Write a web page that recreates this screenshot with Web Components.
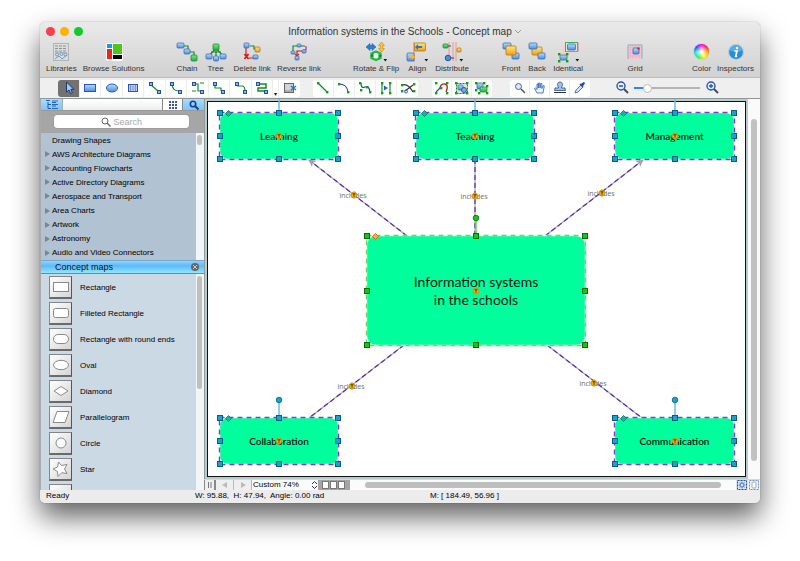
<!DOCTYPE html>
<html lang="en">
<head>
<meta charset="utf-8">
<title>Information systems in the Schools - Concept map</title>
<style>
html,body{margin:0;height:100%;background:#fff}
body{box-sizing:border-box;padding:22px 40px 58px;display:flex;font-family:"Liberation Sans",Arial,sans-serif;font-size:8px;color:#111;overflow:hidden}
</style>
</head>
<body>
<app-window>
  <title-bar slot="title">Information systems in the Schools - Concept map</title-bar>
  <main-toolbar slot="toolbar"></main-toolbar>
  <tool-strip slot="strip"></tool-strip>
  <library-panel slot="side"></library-panel>
  <canvas-view slot="canvas">
    <map-link x1="199" y1="134" x2="101" y2="58" bx="146" by="93" arrow>includes</map-link>
    <map-link x1="267" y1="134" x2="267" y2="58" bx="267" by="94">includes</map-link>
    <map-link x1="337" y1="134" x2="435" y2="58" bx="394" by="91" arrow>includes</map-link>
    <map-link x1="196" y1="243" x2="101" y2="316" bx="144" by="284">includes</map-link>
    <map-link x1="339" y1="243" x2="434" y2="316" bx="386" by="281">includes</map-link>
    <map-node x="12" y="11" w="118" h="46" stem="24">Learning</map-node>
    <map-node x="208" y="11" w="118" h="46" stem="24">Teaching</map-node>
    <map-node x="407" y="11" w="119" h="46" stem="24">Management</map-node>
    <map-node x="12" y="316" w="118" h="46" stem="18">Collaboration</map-node>
    <map-node x="407" y="316" w="119" h="46" stem="18">Communication</map-node>
    <map-node x="159" y="134" w="218" h="109" stem="18" primary>Information systems<br>in the schools</map-node>
  </canvas-view>
  <status-bar slot="status"></status-bar>
</app-window>
<script>
const sq=(x,y,s=4)=>`<rect x="${x+.5}" y="${y+.5}" width="${s}" height="${s}" fill="#8ab6ee" stroke="#2450a0"/>`;
const dot=(x,y)=>`<rect x="${x}" y="${y}" width="2.4" height="2.4" fill="#12a012"/>`;
const box=(x,y,w,h,c='b')=>{const p={b:['url(#gb)','#3d6cae'],g:['url(#gg)','#1f8a35'],o:['url(#go)','#b07a10']}[c];return `<rect x="${x}" y="${y}" width="${w}" height="${h}" rx="1" fill="${p[0]}" stroke="${p[1]}" stroke-width=".8"/>`};
const line=(d,c='#168a2a',w=1.2)=>`<path d="${d}" fill="none" stroke="${c}" stroke-width="${w}"/>`;
const drop='<path d="M17.500 17h3.600l-1.800 2.400z" fill="#111"/>';
const defs='<defs><linearGradient id="gb" x2="0" y2="1"><stop stop-color="#b9dcff"/><stop offset="1" stop-color="#4b8ee0"/></linearGradient><linearGradient id="gg" x2="0" y2="1"><stop stop-color="#7dea7d"/><stop offset="1" stop-color="#1fae4a"/></linearGradient><linearGradient id="go" x2="0" y2="1"><stop stop-color="#ffe680"/><stop offset="1" stop-color="#f0a010"/></linearGradient></defs>';
const lens=s=>`<circle cx="7" cy="6" r="4" fill="#e4effc" stroke="#2c55a8" stroke-width="1.400"/><path d="M10 9l4 4" stroke="#4a4a55" stroke-width="2"/>${s}`;
const ICONS={
 libraries:[20,'<rect x="2.500" y="1.500" width="15" height="17" fill="#d9dde0" stroke="#b4b4b4"/><path d="M4 4h12M4 6.500h12M4 9h12" stroke="#8d9499" stroke-dasharray="3 1"/><g fill="none" stroke="#6d9ac4"><circle cx="6" cy="12.500" r="1.500"/><circle cx="10.500" cy="12" r="1.500"/><circle cx="14.500" cy="12.500" r="1.500"/><path d="M4 17l4-3 3 3 5-4"/></g><path d="M4 10.800h12" stroke="#aaa"/>'],
 browse:[20,'<rect x="2" y="1" width="17" height="18" rx="2" fill="#fff"/><path fill="#1698ea" d="M3 2h5v4H3z"/><path fill="#4cc71c" d="M9 2h9v10H9z"/><path fill="#ef2418" d="M3 7h5v10H3z"/><path fill="#000" d="M9 13h9v4H9z"/>'],
 chain:[20,line('M6 4h5v5M13 10h4v4')+box(0,1,7,5)+box(7,7,6,5)+box(14,13,6,6,'g')],
 tree:[20,line('M10 6L3 14M10 6v9M10 6l7 8M5 10h10')+box(7,2,6,6,'g')+box(0,12,6,5)+box(7.500,14,5,5)+box(14,12,6,5)],
 del:[20,line('M8 4h4v3h2')+line('M4 6v8M7 16h6','#d42020')+box(2,1,5,5)+box(13,5,5,5,'o')+box(11,13,5,4)+line('M2.500 12l4 5M6.500 12l-4 5','#e01515',1.800)],
 rev:[20,line('M4 10V4h4M11 4h5')+line('M17 4v4h-3','#c21bb0')+line('M8 14V9h6','#b52020')+box(8,2,4,3)+box(2,9,4,3)+box(13,8,4,3)+box(6,14,4,4)+line('M6 12l2 2 2-2','#d22')],
 rotate:[20,'<path d="M0 5l4-3.500v2h2v-2l4 3.500-4 3.500v-2H4v2z" fill="#2782d6" stroke="#165299" stroke-width=".5"/><path d="M15.500 0l3 3.500h-1.700v3h1.700l-3 3.500-3-3.500h1.700v-3h-1.700z" fill="#ffc42b" stroke="#a87510" stroke-width=".5"/><path d="M10 9.500l4.500 2v4.500l-4.500 2-4.500-2v-4.500z" fill="#e4f3e4" stroke="#29b548" stroke-width="2.400"/><path d="M4 14l3.500-3v4.500zM16 13.500l-3.500 3v-4.500z" fill="#188a35"/>'+drop],
 align:[20,line('M7 0v20','#ee8080')+box(7.500,1,11,8,'o')+'<path d="M8 5l3-3v2h4v2h-4v2z" fill="#2677d0"/>'+box(0,11,7,8)+'<path d="M8 15l-3-3v2H2v2h3v2z" fill="#ffb81c"/>'+drop],
 dist:[20,line('M7 0v19M11 0v19M14 0v19','#f08a8a',.9)+line('M4 4h5M9 16h3','#444')+box(1,2,5,4,'g')+box(15,6,4,4,'o')+'<circle cx="6" cy="16" r="2.800" fill="#4b8ee0" stroke="#24569c"/>'+drop],
 front:[20,box(2,1,8,6)+box(11,11,7,6)+box(5,4,10,9,'o')],
 back:[20,box(5,5,10,8,'o')+box(2,1,8,6)+box(11,11,7,6)],
 same:[20,'<path d="M7 1h12L8 18H0z" fill="#f5d0b5" opacity=".7"/><rect x="7.500" y=".5" width="12" height="9" fill="#dfe6ea" stroke="#3fae55"/><path d="M8 9.500h12v-9" fill="none" stroke="#e07a6a"/>'+box(9.500,2,8,6)+box(2,13,7,5)+dot(0,11)+dot(8,11)+dot(0,18)+dot(8,18)+drop],
 grid:[20,'<rect x="3" y="3" width="14" height="14" fill="#f3cad2"/><path d="M3 5.500h14M3 8h14M3 11h14M3 14h14M5.500 3v14M8 3v14M11 3v14M14 3v14" stroke="#e9a9b8" stroke-width=".6"/><path d="M3 17V3h14v14" fill="none" stroke="#8fa8d0"/>'+box(8,6,6,6)+'<circle cx="13.500" cy="6.500" r="1.200" fill="#d22"/>'],
 info:[20,'<circle cx="10" cy="10" r="7.500" fill="#2490d8" stroke="#c4ccd4" stroke-width="1.200"/><path d="M3.500 8a6.800 6.800 0 0113 0q-6 4-13 0" fill="#7cc2f0" opacity=".6"/><path d="M8.500 9h2.500l-1.300 5.500h1.500" fill="none" stroke="#fff" stroke-width="1.700"/><circle cx="11" cy="6" r="1.200" fill="#fff"/>'],
 arrow:[14,'<path d="M4.500 1v10l2.500-2 1.600 3.500 1.700-.8L8.800 8.300h3z" fill="#9ec7ff" stroke="#112d66" stroke-width=".9"/>'],
 rect:[14,'<rect x="1.500" y="3.500" width="11" height="7" fill="url(#gb)" stroke="#2b57ad"/>'],
 oval:[14,'<ellipse cx="7" cy="7" rx="5.500" ry="4" fill="url(#gb)" stroke="#2b57ad"/>'],
 text:[14,'<rect x="2.500" y="3.500" width="9" height="7" fill="#b7ccf5" stroke="#2b57ad"/><path d="M4.500 4v6M9.500 4v6" stroke="#6f94d8"/><path d="M6 5.500h2M6 7h2M6 8.500h2" stroke="#c58" stroke-width=".6"/>'],
 l1:[14,line('M3 4l7 6')+sq(1,1,3)+sq(9,9,3)], l2:[14,line('M3 4q1 6 7 6')+sq(1,1,3)+sq(9,9,3)],
 l3:[14,line('M3 3h4v7h3')+line('M1 10h4M9 2h4','#168a2a',1)+sq(1,1,3)+sq(9,9,3)], l4:[14,line('M3 4v3h6v3')+sq(1,1,3)+sq(9,9,3)],
 l5:[14,line('M3 5h5q3 0 3 5')+sq(1,1,3)+sq(9,9,3)], l6:[14,line('M4 3h7v4H3v3h7','#168a2a',1.500)+sq(1,1,3)+sq(9,9,3)],
 dlg:[14,'<rect x="1.500" y="2.500" width="9" height="9" fill="#cfd3d8" stroke="#666"/><path d="M2 10h8" stroke="#888"/><path d="M8 5l5 4M8 9l5-4" stroke="#1878c8" stroke-width="1.400"/>'],
 c1:[14,line('M2 2l9 9','#118a28')+dot(1,1)+dot(10,10)], c2:[14,line('M2 3q8 0 9 8','#2a50b8')+dot(1,2)+dot(10,10)],
 c3:[14,line('M3 2q0 6 4 4t5 5','#2a50b8')+dot(1,1)+dot(2,8)+dot(8,5)+dot(11,10)],
 c4:[14,line('M3 2v10M11 2v10','#168a2a')+'<path d="M5 4.500v5L9 7z" fill="#2a60c8"/>'+dot(2,1)+dot(2,11)+dot(10,1)+dot(10,11)],
 c5:[14,line('M1 4q6-2 11 7M12 4L4 10','#333')+dot(0,3)+dot(12,2)+dot(0,9)+dot(12,9)+'<circle cx="5" cy="10.500" r="1.500" fill="none" stroke="#2a60c8"/>'],
 d1:[14,line('M5 7q1-5 5-4t1 8','#c42020',1.400)+line('M1 11l5-5','#2a50b8')+dot(0,1)+dot(11,1)+dot(0,11)+dot(11,11)+dot(5,6)],
 d2:[14,'<rect x="1.500" y="2.500" width="11" height="10" fill="#d5e7d5" stroke="#168a2a" stroke-dasharray="2 1"/>'+box(3,4,5,5)+'<circle cx="9" cy="9" r="2.500" fill="#79aced" stroke="#2b57ad"/>'+dot(0,1)+dot(11,1)+dot(0,11)+dot(11,11)],
 d3:[14,box(2,2,6,6)+box(5,6,7,5,'g')+dot(0,1)+dot(8,1)+dot(0,8)+dot(3,11)+dot(11,11)+dot(11,4)],
 lens:[14,'<circle cx="5.500" cy="5.500" r="3" fill="#dce9fa" stroke="#3f66ae"/><path d="M8 8l4 4" stroke="#555" stroke-width="1.500"/>'],
 hand:[14,'<path d="M4 12L1.500 7.500l1-.7L4 8.500V3h1.200v4l.4-5h1.200l.2 5 .8-4.500h1.100L8.800 7.500l1.500-3 1 .4L10 12z" fill="#eaf2ff" stroke="#2b5bb5" stroke-width=".8"/>'],
 stamp:[14,'<path d="M7 1a2.500 2.500 0 012 4l-.5 2H12l.5 2.500h-11L2 7h3.500L5 5a2.500 2.500 0 012-4z" fill="#9ec2ee" stroke="#2b4f8f" stroke-width=".8"/><path d="M1 11.500h12" stroke="#333"/>'],
 pen:[14,'<path d="M2 12l1-3 5-5 2 2-5 5z" fill="#cfe2fb" stroke="#2b5bb5" stroke-width=".8"/><path d="M8 3l1-1 2-1 1 1-1 2-1 1 .5 1-1 .5-3-3 .5-1z" fill="#2b4f9f"/>'],
 zout:[16,lens('<path d="M5 6h4" stroke="#2c55a8" stroke-width="1.300"/>')], zin:[16,lens('<path d="M5 6h4M7 4v4" stroke="#2c55a8" stroke-width="1.300"/>')],
 outline:[14,'<path d="M1 2.500h4M3 4v6.500h3M3 6.500h3" stroke="#1d5cae" fill="none"/><path d="M7 3h6M7 6.500h6M7 10.500h6M7 4.500h4M7 8h4" stroke="#1d5cae" stroke-width=".9"/>'],
 tiles:[14,'<g fill="#3a5ba0"><rect x="3" y="3" width="2" height="2"/><rect x="6" y="3" width="2" height="2"/><rect x="9" y="3" width="2" height="2"/><rect x="3" y="6" width="2" height="2"/><rect x="6" y="6" width="2" height="2"/><rect x="9" y="6" width="2" height="2"/><rect x="3" y="9" width="2" height="2"/><rect x="6" y="9" width="2" height="2"/><rect x="9" y="9" width="2" height="2"/></g>'],
 find:[14,'<circle cx="6" cy="6" r="2.700" fill="none" stroke="#0c3f9c" stroke-width="1.600"/><path d="M8 8l3.500 3.500" stroke="#0c3f9c" stroke-width="2"/>'],
 search:[12,'<circle cx="5" cy="5" r="3" fill="none" stroke="#666"/><path d="M7.300 7.300L10.500 10.500" stroke="#666" stroke-width="1.300"/>'],
 fit:[12,'<rect x="1.500" y="1.500" width="9" height="9" fill="none" stroke="#234f96" stroke-dasharray="2 1"/><path d="M6 2l1 2 2-1-1 2 2 1-2 1 1 2-2-1-1 2-1-2-2 1 1-2-2-1 2-1-1-2 2 1z" fill="#6795d8"/><circle cx="6" cy="6" r="1" fill="#fff"/>'],
 fitp:[12,'<rect x="1.500" y="1.500" width="9" height="9" fill="none" stroke="#6f8fc0" stroke-dasharray="2 1"/><rect x="4" y="3" width="4" height="6" rx="1" fill="#fff" stroke="#9ab"/>']
};
const S={ // outlines of the stencils in the library
 Rectangle:'<rect x="4.500" y="6.500" width="15" height="9"/>',
 'Filleted Rectangle':'<rect x="4.500" y="6.500" width="15" height="9" rx="2"/>',
 'Rectangle with round ends':'<rect x="4.500" y="6.500" width="15" height="9" rx="4.500"/>',
 Oval:'<ellipse cx="12" cy="11" rx="7.500" ry="4.700"/>',
 Diamond:'<path d="M12 6.500l7 4.500-7 4.500L5 11z"/>',
 Parallelogram:'<path d="M8 5.500h12l-4 11H4z"/>',
 Circle:'<circle cx="12" cy="11" r="5"/>',
 Star:'<path d="M9.500 4l3 3.500 5.500-1-2.500 4.500 2.500 4.500-5.300-.8L9 18.500l-.5-5L4 11l4.500-2z"/>'
};
function define(name,html,init){
  const t=document.createElement('template');t.innerHTML=html;
  customElements.define(name,class extends HTMLElement{
    constructor(){super();this.attachShadow({mode:'open'});}
    connectedCallback(){if(this.done)return;this.done=true;this.shadowRoot.append(t.content.cloneNode(true));if(init)init(this,this.shadowRoot);}
  });
}
const btnReset='button{font:inherit;color:inherit;border:0;background:none;padding:0;margin:0;display:flex;align-items:center;justify-content:center}';

define('ui-icon','<style>:host{display:block;flex:none}svg{display:block;overflow:visible}</style>',(h,r)=>{
  const [s,m]=ICONS[h.getAttribute('name')];
  r.innerHTML+=`<svg width="${s}" height="${s}" viewBox="0 0 ${s} ${s}" aria-hidden="true">${defs}${m}</svg>`;
});

define('app-window',`<style>
:host{flex:1;min-width:0;display:grid;grid-template:auto auto minmax(0,1fr) auto / 164px minmax(0,1fr);border-radius:5px;overflow:hidden;background:#ececec;box-shadow:0 0 1px rgba(0,0,0,.5),0 14px 28px rgba(0,0,0,.62)}
.head{grid-column:1/-1;background:linear-gradient(#eaeaea,#d1d1d1);border-bottom:1px solid #bdbdbd}
.strip{grid-column:1/-1;border-bottom:1px solid #8f9696}
.side,.canvas{min-height:0;min-width:0;display:grid}
.status{grid-column:1/-1}
</style><div class="head"><slot name="title"></slot><slot name="toolbar"></slot></div><div class="strip"><slot name="strip"></slot></div><div class="side"><slot name="side"></slot></div><div class="canvas"><slot name="canvas"></slot></div><div class="status"><slot name="status"></slot></div>`);

define('title-bar',`<style>
:host{display:grid;grid-template-columns:1fr auto 1fr;align-items:center;height:18px;padding:0 6px;font-size:10px;color:#333}
.lights{display:flex;gap:5px}${btnReset}
.lights button{width:9px;height:9px;border-radius:50%;background:#fc3d4b}
.lights button:nth-child(2){background:#fdb400}.lights button:nth-child(3){background:#10cb2a}
svg{display:block;margin-left:3px}
</style><div class="lights"><button aria-label="Close"></button><button aria-label="Minimize"></button><button aria-label="Zoom"></button></div><span><slot></slot></span><svg width="6" height="5" viewBox="0 0 6 5"><path d="M0 1l3 3 3-3" fill="none" stroke="#999"/></svg>`);

define('tool-button',`<style>
:host{display:block}${btnReset}
button{flex-direction:column;min-width:var(--min,18px);gap:2px;line-height:10px;color:#333;white-space:nowrap}
.wheel{width:15px;height:15px;margin:2px 2px 3px;border-radius:50%;background:radial-gradient(#fff 5%,transparent 65%),conic-gradient(#f0f,#f22,#fa0,#ff0,#3e3,#0ee,#24f,#f0f);box-shadow:0 0 1px #777;display:block}
</style><button><span class="i"></span><slot></slot></button>`,(h,r)=>{
  const n=h.getAttribute('icon');r.querySelector('.i').innerHTML=n==='wheel'?'<span class="wheel"></span>':`<ui-icon name="${n}"></ui-icon>`;
});

define('main-toolbar',`<style>
:host{display:flex;height:35px;padding:2px 6px 0;align-items:flex-start}
div{display:flex;gap:6px}i{flex:35 0 0}.wide{flex-grow:46}.wide2{flex-grow:51}
</style>
<div><tool-button icon="libraries">Libraries</tool-button><tool-button icon="browse">Browse Solutions</tool-button></div><i></i>
<div><tool-button icon="chain">Chain</tool-button><tool-button icon="tree" style="--min:24px">Tree</tool-button><tool-button icon="del">Delete link</tool-button><tool-button icon="rev">Reverse link</tool-button></div><i></i>
<div><tool-button icon="rotate">Rotate &amp; Flip</tool-button><tool-button icon="align" style="--min:24px">Align</tool-button><tool-button icon="dist">Distribute</tool-button></div><i></i>
<div><tool-button icon="front">Front</tool-button><tool-button icon="back">Back</tool-button><tool-button icon="same">Identical</tool-button></div><i class="wide"></i>
<div><tool-button icon="grid">Grid</tool-button></div><i class="wide2"></i>
<div><tool-button icon="wheel">Color</tool-button><tool-button icon="info">Inspectors</tool-button></div>`);

define('tool-strip',`<style>
:host{display:flex;align-items:center;height:20px;padding:0 40px 0 18px;background:#efefef}
${btnReset}
.g{display:flex;height:17px;background:#fff;border-radius:3px;margin-right:14px}
.g button{width:21px;border-right:1px solid #ececec;box-sizing:border-box}
.g.n button{width:20px}.g button:last-child{border:0}
.g .more{width:6px;align-items:flex-end;font-size:6px}
.first{margin-right:13px}
.first button:nth-child(odd):not(.more){width:22px}
.g button[aria-pressed]{background:#727272;border-radius:3px 0 0 3px}
.mid{margin-right:18px}
.zoom{margin-left:auto;display:flex;align-items:center;gap:4px}
input{appearance:none;-webkit-appearance:none;width:66px;height:10px;margin:0;background:linear-gradient(90deg,#2a8cf0 20%,#b5b5b5 20%) center/100% 2px no-repeat}
input::-webkit-slider-thumb{-webkit-appearance:none;width:9px;height:9px;border-radius:50%;background:#fff;border:1px solid #bcbcbc}
</style><div class="g first"></div><div class="g"></div><div class="g n mid"></div><div class="g n"></div>
<div class="zoom"><button aria-label="Zoom out"><ui-icon name="zout"></ui-icon></button><input type="range" aria-label="Zoom" min="0" max="100" value="16"><button aria-label="Zoom in"><ui-icon name="zin"></ui-icon></button></div>`,(h,r)=>{
  const sets=['arrow rect oval text l1 l2 l3 l4 l5 l6 more dlg','c1 c2 c3 c4 c5','d1 d2 d3','lens hand stamp pen'];
  r.querySelectorAll('.g').forEach((g,i)=>g.innerHTML=sets[i].split(' ').map(n=>n==='more'?'<button class="more" aria-label="More connectors">▾</button>':`<button aria-label="${n}"${n==='arrow'?' aria-pressed="true"':''}><ui-icon name="${n}"></ui-icon></button>`).join(''));
});

define('library-panel',`<style>
:host{display:flex;flex-direction:column;min-height:0;border-left:1px solid #aaa}
${btnReset}
.tabs{display:flex;height:12px;background:#f8f8f8;border-bottom:1px solid #999;box-sizing:border-box}
.tabs button{width:21px;background:linear-gradient(#a9dcff,#7cc4fb)}.tabs button:nth-child(3){background:#fff;border-left:1px solid #888;border-right:1px solid #888}
.tabs span{flex:1;border-left:1px solid #aaa;background:linear-gradient(#fff,#eee)}
.find{height:22px;background:#a6a6a6;padding:4px 15px 5px 13px;box-sizing:border-box}
.find label{display:flex;align-items:center;justify-content:center;height:13px;background:#fff;border-radius:3px;gap:2px;box-shadow:0 0 1px #555}
.find input{border:0;outline:0;background:none;padding:0;width:30px;font:9px "Liberation Sans",Arial,sans-serif}
input::placeholder{color:#a8a8a8}
.pane{display:flex;min-height:0}
.bar{width:8px;background:#f3f5f7;padding:2px 1px;box-sizing:border-box}.bar i{display:block;width:5px;border-radius:3px;background:#bfbfbf}
.tree{height:127px;background:#b1c2d3;color:#000}
ul{margin:0;padding:0;list-style:none;flex:1;min-width:0}
.tree ul{display:flex;flex-direction:column;overflow:hidden}.tree li{flex:1 0 14px;display:flex}
.tree button{gap:2px}.tree svg{flex:none;margin-left:4px}
h2{margin:0;height:12px;border-bottom:1px solid #6d8aa0;border-top:1px solid #7aa8c8;background:linear-gradient(#8fd3ff,#5cb9fa 40%,#8fe8ff);font:9px/11px "Liberation Sans",Arial,sans-serif;padding:0 5px 0 14px;display:flex;justify-content:space-between;align-items:center}
.x{width:8px;height:8px;border-radius:50%;background:#666}
.shapes{flex:1;background:#cbd9e5;overflow:hidden}
.shapes ul{padding:1px 0 0 8px}
.shapes li{height:26px}.shapes button{gap:8px;height:24px;color:#000}
.t{display:block;width:23px;height:23px;box-sizing:border-box;border:1px solid #83878c;border-right-color:#555;border-bottom:2px solid #6a6a6a;background:linear-gradient(135deg,#fff,#d4d4d4);overflow:hidden}
.t svg{display:block;margin:-1px}
</style>
<div class="tabs"><button aria-label="Outline"><ui-icon name="outline"></ui-icon></button><span></span><button aria-label="Tiles"><ui-icon name="tiles"></ui-icon></button><button aria-label="Find"><ui-icon name="find"></ui-icon></button></div>
<div class="find"><label><ui-icon name="search"></ui-icon><input type="text" aria-label="Search" placeholder="Search"></label></div>
<div class="pane tree"><ul></ul><div class="bar"><i style="height:10px"></i></div></div>
<h2>Concept maps<button class="x" aria-label="Close library"><svg width="4" height="4" viewBox="0 0 4 4"><path d="M0 0l4 4M4 0L0 4" stroke="#ccc"/></svg></button></h2>
<div class="pane shapes"><ul></ul><div class="bar"><i style="height:113px"></i></div></div>`,(h,r)=>{
  const [a,b]=r.querySelectorAll('ul');
  a.innerHTML=['Drawing Shapes','AWS Architecture Diagrams','Accounting Flowcharts','Active Directory Diagrams','Aerospace and Transport','Area Charts','Artwork','Astronomy','Audio and Video Connectors'].map((t,i)=>`<li><button><svg width="5" height="6" viewBox="0 0 5 6">${i?'<path d="M0 0l5 3-5 3z" fill="#7c8691"/>':''}</svg>${t}</button></li>`).join('');
  b.innerHTML=Object.entries(S).map(([n,m])=>`<li><button><span class="t"><svg width="24" height="24" fill="#fff" stroke="#8a8a8a">${m}</svg></span>${n}</button></li>`).join('')+'<li><button aria-label="More shapes"><span class="t"><svg width="24" height="24" fill="#fff" stroke="#8a8a8a"><rect x="7.500" y="7.500" width="9" height="9"/></svg></span></button></li>';
});

define('canvas-view',`<style>
:host{display:grid;grid-template:minmax(0,1fr) 11px / minmax(0,1fr) 12px;min-height:0;min-width:0;background:#fafafa}
${btnReset}
.area{background:#b7cccb;padding:2px;overflow:hidden;display:grid;border-left:1px solid #8f9a9a}
.page{position:relative;background:#fff;border:1px solid #111}
.v{padding:20px 3px 18px}.v i{display:block;width:6px;height:100%;border-radius:3px;background:#c1c1c1}
.foot{grid-column:1/-1;display:flex;align-items:stretch;border-top:1px solid #d8d8d8;box-sizing:border-box;background:#fbfbfb}
.foot button{width:18px;border-right:1px solid #bbb;background:#efefef;box-sizing:border-box}
.foot .split{width:12px;border-right:2px solid #888;border-left:1px solid #888}
.sel{display:flex;align-items:center;width:66px}
select{appearance:none;border:0;background:none;padding:0 0 0 1px;margin:0;font:8px/10px "Liberation Sans",Arial,sans-serif;width:60px;height:10px;color:#000}
.pages{display:flex;gap:1px;align-items:center;background:#a5a5a5;padding:0 5px 0 4px}.pages i{width:5px;height:6px;border:1px solid #777;background:#fff}
.h{flex:1;padding:2px 15px}.h i{display:block;height:6px;border-radius:3px;background:#bebebe}
.foot .f{width:auto;border:0;background:#dfe6ee;flex:none}
.foot .f:last-child{background:#f2f5f8}
</style><div class="area"><div class="page"><slot></slot></div></div><div class="v"><i></i></div>
<div class="foot"><button class="split" aria-label="Split"><svg width="5" height="6"><path d="M1.500 0v6M4 0v6" stroke="#777"/></svg></button>
<button aria-label="Previous page"><svg width="6" height="6"><path d="M5 0v6L0 3z" fill="#bbb"/></svg></button><button aria-label="Next page"><svg width="6" height="6"><path d="M1 0v6l5-3z" fill="#bbb"/></svg></button>
<div class="sel"><select aria-label="Zoom level"><option>Custom 74%</option></select><svg width="5" height="8" viewBox="0 0 5 8"><path d="M0 3l2.500-2.500L5 3M0 5l2.500 2.500L5 5" fill="none" stroke="#333"/></svg></div>
<div class="pages"><i></i><i></i><i></i></div><div class="h"><i></i></div><button class="f" aria-label="Fit drawing"><ui-icon name="fit"></ui-icon></button><button class="f" aria-label="Fit page"><ui-icon name="fitp"></ui-icon></button></div>`);

const badge='<circle r="2.800" fill="#ffb400" stroke="#c98200" stroke-width=".8"/><path d="M-4 0l1.500-1.500v3zM4 0L2.500-1.500v3zM0-4l1.500 1.500h-3zM0 4l1.500-1.500h-3z" fill="#e0a020"/><path d="M-1.500-1.200h3M0-1.200v3" stroke="#222" stroke-width=".8"/>';

define('map-link',`<style>
:host{position:absolute;left:0;top:0;font:7px/10px "Noto Sans","Open Sans",sans-serif;color:#777}
svg{position:absolute;left:0;top:0;width:1px;height:1px;overflow:visible}
span{position:absolute;transform:translate(-50%,-50%);white-space:nowrap}
</style>`,(h,r)=>{
  const g=k=>+h.getAttribute(k),[x1,y1,x2,y2,bx,by]=['x1','y1','x2','y2','bx','by'].map(g);
  const a=Math.atan2(y2-y1,x2-x1)*180/Math.PI;
  r.innerHTML+=`<svg><path d="M${x1} ${y1}L${x2} ${y2}" stroke="#aaa" stroke-width="1.300"/><path d="M${x1} ${y1}L${x2} ${y2}" stroke="#5a22c8" stroke-width="1.200" stroke-dasharray="5 3"/>${h.hasAttribute('arrow')?`<path transform="translate(${x2} ${y2}) rotate(${a})" d="M0 0l-6-3 2 3-2 3z" fill="#aaa" stroke="#888" stroke-width=".5"/>`:''}</svg><span style="left:${bx-1}px;top:${by+1}px"><slot></slot></span><svg><g transform="translate(${bx} ${by})">${badge}</g></svg>`;
});

define('map-node',`<style>
:host{position:absolute;display:flex;align-items:center;justify-content:center;text-align:center;font:600 10px/13px Lato,sans-serif;color:#111;background:#00ff9c;border-radius:8px}
:host([primary]){font-size:14px;font-weight:400;line-height:18px;border-radius:9px}
svg{position:absolute;inset:0;width:100%;height:100%;overflow:visible}
</style><slot></slot>`,(h,r)=>{
  const g=k=>+h.getAttribute(k),p=h.hasAttribute('primary'),w=g('w'),ht=g('h'),st=g('stem');
  Object.assign(h.style,{left:g('x')+'px',top:g('y')+'px',width:w+'px',height:ht+'px'});
  const fill=p?'#12c812':'#12a6cc',edge=p?'#0a6a0a':'#0d5c80',cx=Math.round(w/2),cy=Math.round(ht/2);
  let s=`<rect x="-.5" y="-.5" width="${w+1}" height="${ht+1}" fill="none" stroke="#fff" stroke-width="1.400"/><rect x="-.5" y="-.5" width="${w+1}" height="${ht+1}" fill="none" stroke="${p?'#63d863':'#8436dc'}" stroke-width="1.400" stroke-dasharray="5 4"/>`;
  s+=`<path d="M${cx} 0V-${st}" stroke="${p?'#5fd95f':'#6db9f0'}" stroke-width="1.500"/><circle cx="${cx}" cy="-${st}" r="2.800" fill="${fill}" stroke="${edge}" stroke-width=".8"/>`;
  for(const x of[0,cx,w])for(const y of[0,cy,ht])if(x!==cx||y!==cy)s+=`<rect x="${x-2.5}" y="${y-2.5}" width="5" height="5" fill="${fill}" stroke="${edge}"/>`;
  s+=`<path d="M8.500-2.500l3 3-3 3-3-3z" fill="${p?'#ffb020':'#12b6a8'}" stroke="${p?'#d05a10':'#0d6c68'}" stroke-width=".8"/><g transform="translate(${cx} ${cy})">${badge}</g>`;
  r.innerHTML+=`<svg>${s}</svg>`;
});

define('status-bar',`<style>
:host{display:grid;grid-template-columns:149px 235px 1fr;height:13px;line-height:12px;padding:0 6px;background:#ececec;color:#000;white-space:pre}
</style><span>Ready</span><span>W: 95.88,  H: 47.94,  Angle: 0.00 rad</span><span>M: [ 184.49, 56.96 ]</span>`);
</script>
</body>
</html>
